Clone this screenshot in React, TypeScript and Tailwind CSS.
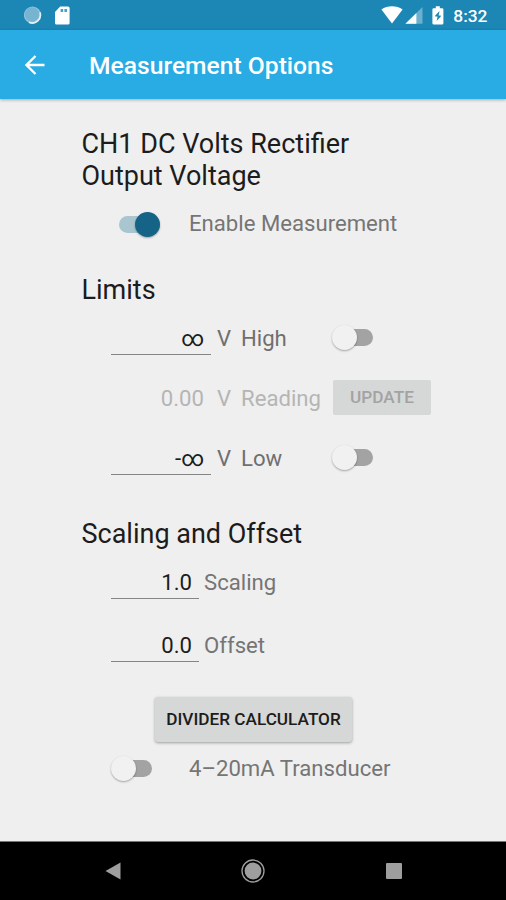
import React from 'react'
import clsx from 'clsx'

const StatusBar = () => {
  return (
    <div className="flex h-[30px] items-center bg-[#1c86b5] pr-[18.5px] pl-6 text-white">
      <svg className="h-[18px] w-[18px]" viewBox="0 0 18 18">
        <circle cx="8.5" cy="9" r="8.6" fill="#8fc3dc" />
        <circle cx="8" cy="8.5" r="7.2" fill="#76b4d2" />
        <path d="M16 6.5A8 8 0 0 1 5 16.2" fill="none" stroke="#e6f3f9" strokeWidth="1.6" />
      </svg>
      <svg className="ml-[13px] h-[19px] w-[15px]" viewBox="0 0 15 18">
        <path
          fill="#fff"
          d="M5.2 0H13a1.6 1.6 0 0 1 1.6 1.6v14.8A1.6 1.6 0 0 1 13 18H1.6A1.6 1.6 0 0 1 0 16.4V5.4z"
        />
        <path d="M5.6 2.4h2.6v3H5.6zM9.4 2.4H12v3H9.4z" fill="#4a9fc6" />
      </svg>
      {/* right side icons */}
      <div className="ml-auto flex items-center">
        <svg className="h-[18px] w-[22px]" viewBox="0 0 22 18">
          <path d="M0.4 3.6C6.5-0.8 15.5-0.8 21.6 3.6L11 17.6z" fill="#fff" />
        </svg>
        <svg className="ml-[2px] h-[18px] w-[18px]" viewBox="0 0 18 18">
          <path d="M17.5 1v16.7H0.4z" fill="#fff" opacity="0.35" />
          <path d="M11.4 7v10.7H0.4z" fill="#fff" />
        </svg>
        <svg className="ml-[9px] h-[19px] w-3" viewBox="0 0 12 19">
          <path
            fill="#fff"
            d="M3.8 0.3h4v1.9H10a1.4 1.4 0 0 1 1.4 1.4v13.6a1.4 1.4 0 0 1-1.4 1.4H1.8a1.4 1.4 0 0 1-1.4-1.4V3.6a1.4 1.4 0 0 1 1.4-1.4h2z"
          />
          <path d="M7.6 5L3.2 9.4v1.2h2.4L4.6 15 8.8 10.6V9.4H6.6z" fill="#1c86b5" />
        </svg>
        <span className="ml-[9px] pt-px text-[17.4px] leading-5 font-medium">8:32</span>
      </div>
    </div>
  )
}

const Toggle = ({ on = false }: { on?: boolean }) => {
  return (
    <div className="flex h-[26px] w-[42px] shrink-0 items-center">
      <div
        className={clsx(
          'flex h-[17px] items-center rounded-full',
          on ? 'w-[41px] justify-end bg-[#a9c6d0]' : 'ml-[8px] w-[33px] bg-[#a3a3a3]'
        )}
      >
        <div
          className={clsx(
            'h-[25px] w-[25px] shrink-0 rounded-full shadow-[0_1px_2px_rgba(0,0,0,0.32)]',
            on ? 'bg-[#156487]' : '-ml-[8px] bg-[#f1f1f1]'
          )}
        ></div>
      </div>
    </div>
  )
}

const Heading = ({ children }: { children: React.ReactNode }) => {
  return <h2 className="-ml-[0.5px] text-[27px] leading-8 text-[#1c1c1c]">{children}</h2>
}

const LimitRow = ({ value, label, disabled, children }: { value: string; label: string; disabled?: boolean; children: React.ReactNode }) => {
  return (
    <div className={clsx('flex h-[34px] items-center pl-[29px]', disabled ? 'text-[#b5b5b5]' : 'text-[#6f6f6f]')}>
      <div
        className={clsx(
          'h-[34px] w-[100px] border-b pr-[7px] text-right leading-[34px]',
          disabled ? 'border-transparent' : 'border-[#858585] text-[#1c1c1c]'
        )}
      >
        {value}
      </div>
      <span className="ml-[6px] w-[24px] pt-px">V</span>
      <span className="w-[91px] pt-px">{label}</span>
      <div className="-mt-[2px]">{children}</div>
    </div>
  )
}

const ValueRow = ({ value, label }: { value: string; label: string }) => {
  return (
    <div className="flex h-[34px] items-center pl-[29px] text-[#757575]">
      <div className="h-[34px] w-[88px] border-b border-[#858585] pr-[7px] text-right leading-[34px] text-[#1c1c1c]">{value}</div>
      <span className="ml-[5px] pt-px">{label}</span>
    </div>
  )
}

const App = () => {
  return (
    <div className="flex h-[900px] w-[506px] flex-col overflow-hidden bg-[#efefef] font-['Roboto',sans-serif] text-[22.15px]">
      <StatusBar />
      {/* app bar */}
      <header className="flex h-[69px] shrink-0 items-center bg-[#29abe4] pl-[25px] text-white shadow-[0_1px_3px_rgba(0,0,0,0.3)]">
        <svg className="h-5 w-5" viewBox="0 0 20 20">
          <path d="M19.5 10H2M10.5 1L1.5 10l9 9" fill="none" stroke="#fff" strokeWidth="2.3" />
        </svg>
        <h1 className="ml-11 pt-[3px] text-[24.65px] leading-8 font-medium">Measurement Options</h1>
      </header>

      <main className="flex grow flex-col pt-[29px] pl-[82px]">
        <Heading>
          CH1 DC Volts Rectifier
          <br />
          Output Voltage
        </Heading>
        <div className="mt-[15px] flex h-[34px] items-center pl-[37px] text-[#757575]">
          <Toggle on />
          <span className="ml-[28px]">Enable Measurement</span>
        </div>

        <div className="mt-[33px]">
          <Heading>Limits</Heading>
        </div>
        <div className="mt-[15px] flex flex-col gap-[26px]">
          <LimitRow value="∞" label="High">
            <Toggle />
          </LimitRow>
          <LimitRow value="0.00" label="Reading" disabled>
            <div className="ml-px flex h-[35px] w-[98px] items-center justify-center rounded-[2px] bg-[#d6d7d7] pt-[2px] text-[17.2px] font-medium text-[#a2a3a3]">
              UPDATE
            </div>
          </LimitRow>
          <LimitRow value="-∞" label="Low">
            <Toggle />
          </LimitRow>
        </div>

        <div className="mt-[43px]">
          <Heading>Scaling and Offset</Heading>
        </div>
        <div className="mt-[15px] flex flex-col gap-[29px]">
          <ValueRow value="1.0" label="Scaling" />
          <ValueRow value="0.0" label="Offset" />
        </div>

        <div className="mt-[35px] ml-[73px] flex h-[45px] w-[197px] items-center justify-center rounded-[3px] bg-[#d6d7d7] text-[17.2px] font-medium text-[#1c1c1c] shadow-[0_1px_3px_rgba(0,0,0,0.35)]">
          DIVIDER CALCULATOR
        </div>
        <div className="mt-[9px] flex h-[34px] items-center pl-[29px] text-[#757575]">
          <Toggle />
          <span className="ml-[36px] pt-px">4–20mA Transducer</span>
        </div>
      </main>

      {/* navigation bar */}
      <nav className="flex h-[59px] shrink-0 items-center border-t border-[#777] bg-black pl-[105px]">
        <svg className="h-[18px] w-4" viewBox="0 0 16 18">
          <path d="M0.5 9L15.5 0.5v17z" fill="#9e9e9e" />
        </svg>
        <svg className="ml-[120px] h-6 w-6" viewBox="0 0 24 24">
          <circle cx="12" cy="12" r="11" fill="none" stroke="#9e9e9e" strokeWidth="1.3" />
          <circle cx="12" cy="12" r="8.4" fill="#9e9e9e" />
        </svg>
        <div className="ml-[120.5px] h-4 w-4 rounded-[1px] bg-[#9e9e9e]"></div>
      </nav>
    </div>
  )
}

export default App
